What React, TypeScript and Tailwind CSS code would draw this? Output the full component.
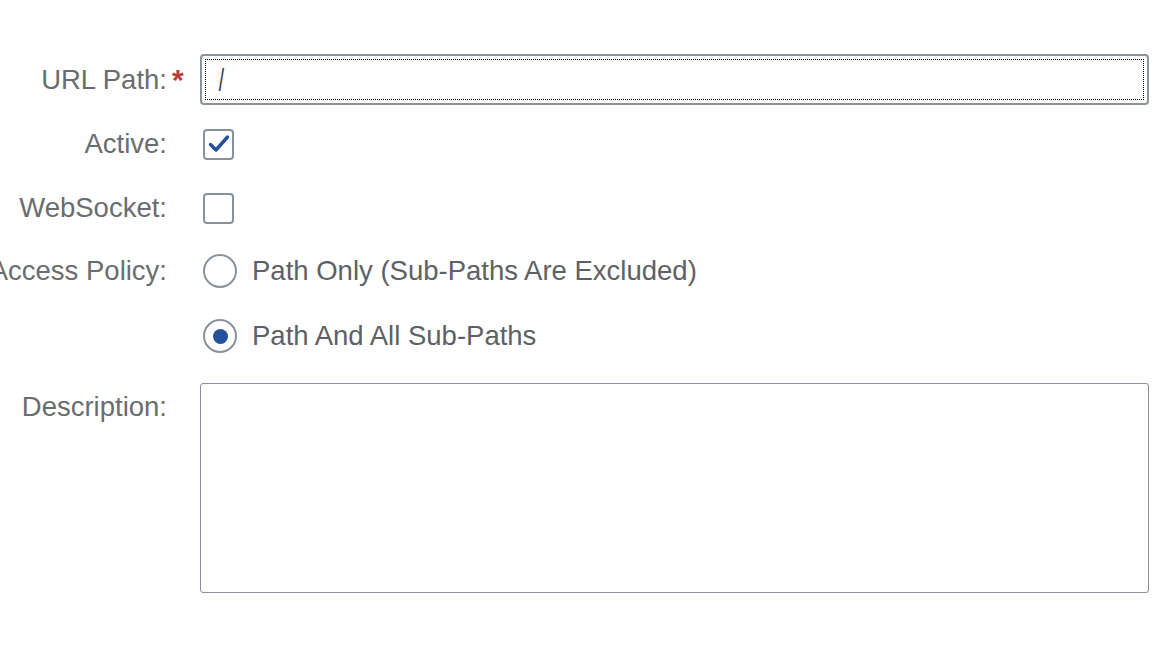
import React from "react";

const font = { fontFamily: '"Liberation Sans", Arial, sans-serif' };

function Label({ text, required }: { text: string; required?: boolean }) {
  return (
    <div className="flex w-[200px] shrink-0 items-center">
      <div className="flex w-[167px] justify-end whitespace-nowrap text-[27.5px] text-[#6a6d70]">
        {text}
      </div>
      {required && (
        <span className="ml-[5px] text-[30px] font-bold leading-none text-[#bb3b3b]">*</span>
      )}
    </div>
  );
}

function Checkbox({ checked }: { checked?: boolean }) {
  return (
    <div className="ml-[3px] flex h-[31px] w-[31px] items-center justify-center rounded-[4px] border-2 border-[#89919a] bg-white">
      {checked && (
        <svg width="22" height="20" viewBox="0 0 22 20">
          <path
            d="M2.5 10.5 L8 16 L19.5 3"
            fill="none"
            stroke="#23529a"
            strokeWidth="3.4"
            strokeLinecap="round"
            strokeLinejoin="round"
          />
        </svg>
      )}
    </div>
  );
}

function Radio({ selected, label }: { selected?: boolean; label: string }) {
  return (
    <div className="flex items-center">
      <div className="ml-[3px] flex h-[34px] w-[34px] items-center justify-center rounded-full border-2 border-[#89919a] bg-white">
        {selected && <div className="h-[15px] w-[15px] rounded-full bg-[#23529a]" />}
      </div>
      <span className="ml-[15px] whitespace-nowrap text-[27.5px] text-[#5e6164]">{label}</span>
    </div>
  );
}

export default function App() {
  return (
    <div className="h-[652px] w-[1176px] overflow-hidden bg-white pt-[54px]" style={font}>
      {/* URL Path */}
      <div className="flex h-[51px]">
        <Label text="URL Path:" required />
        <div className="relative flex h-[51px] w-[949px] items-center rounded-[4px] border-2 border-[#8d939a] bg-white pl-[15px]">
          <div className="absolute inset-[3px] border border-dotted border-black" />
          <span className="inline-block scale-x-[0.6] text-[32px] leading-none text-[#32363a]">/</span>
        </div>
      </div>

      {/* Active */}
      <div className="mt-[14px] flex h-[50px] items-center">
        <Label text="Active:" />
        <Checkbox checked />
      </div>

      {/* WebSocket */}
      <div className="mt-[14px] flex h-[50px] items-center">
        <Label text="WebSocket:" />
        <Checkbox />
      </div>

      {/* Access Policy */}
      <div className="mt-[13px] flex h-[50px] items-center">
        <Label text="Access Policy:" />
        <Radio label="Path Only (Sub-Paths Are Excluded)" />
      </div>
      <div className="mt-[15px] flex h-[50px] items-center">
        <div className="w-[200px] shrink-0" />
        <Radio selected label="Path And All Sub-Paths" />
      </div>

      {/* Description */}
      <div className="mt-[22px] flex">
        <div className="flex h-[48px] w-[200px] shrink-0 items-center">
          <div className="flex w-[167px] justify-end whitespace-nowrap text-[27.5px] text-[#6a6d70]">
            Description:
          </div>
        </div>
        <div className="h-[210px] w-[949px] rounded-[3px] border border-[#89919a] bg-white" />
      </div>
    </div>
  );
}
